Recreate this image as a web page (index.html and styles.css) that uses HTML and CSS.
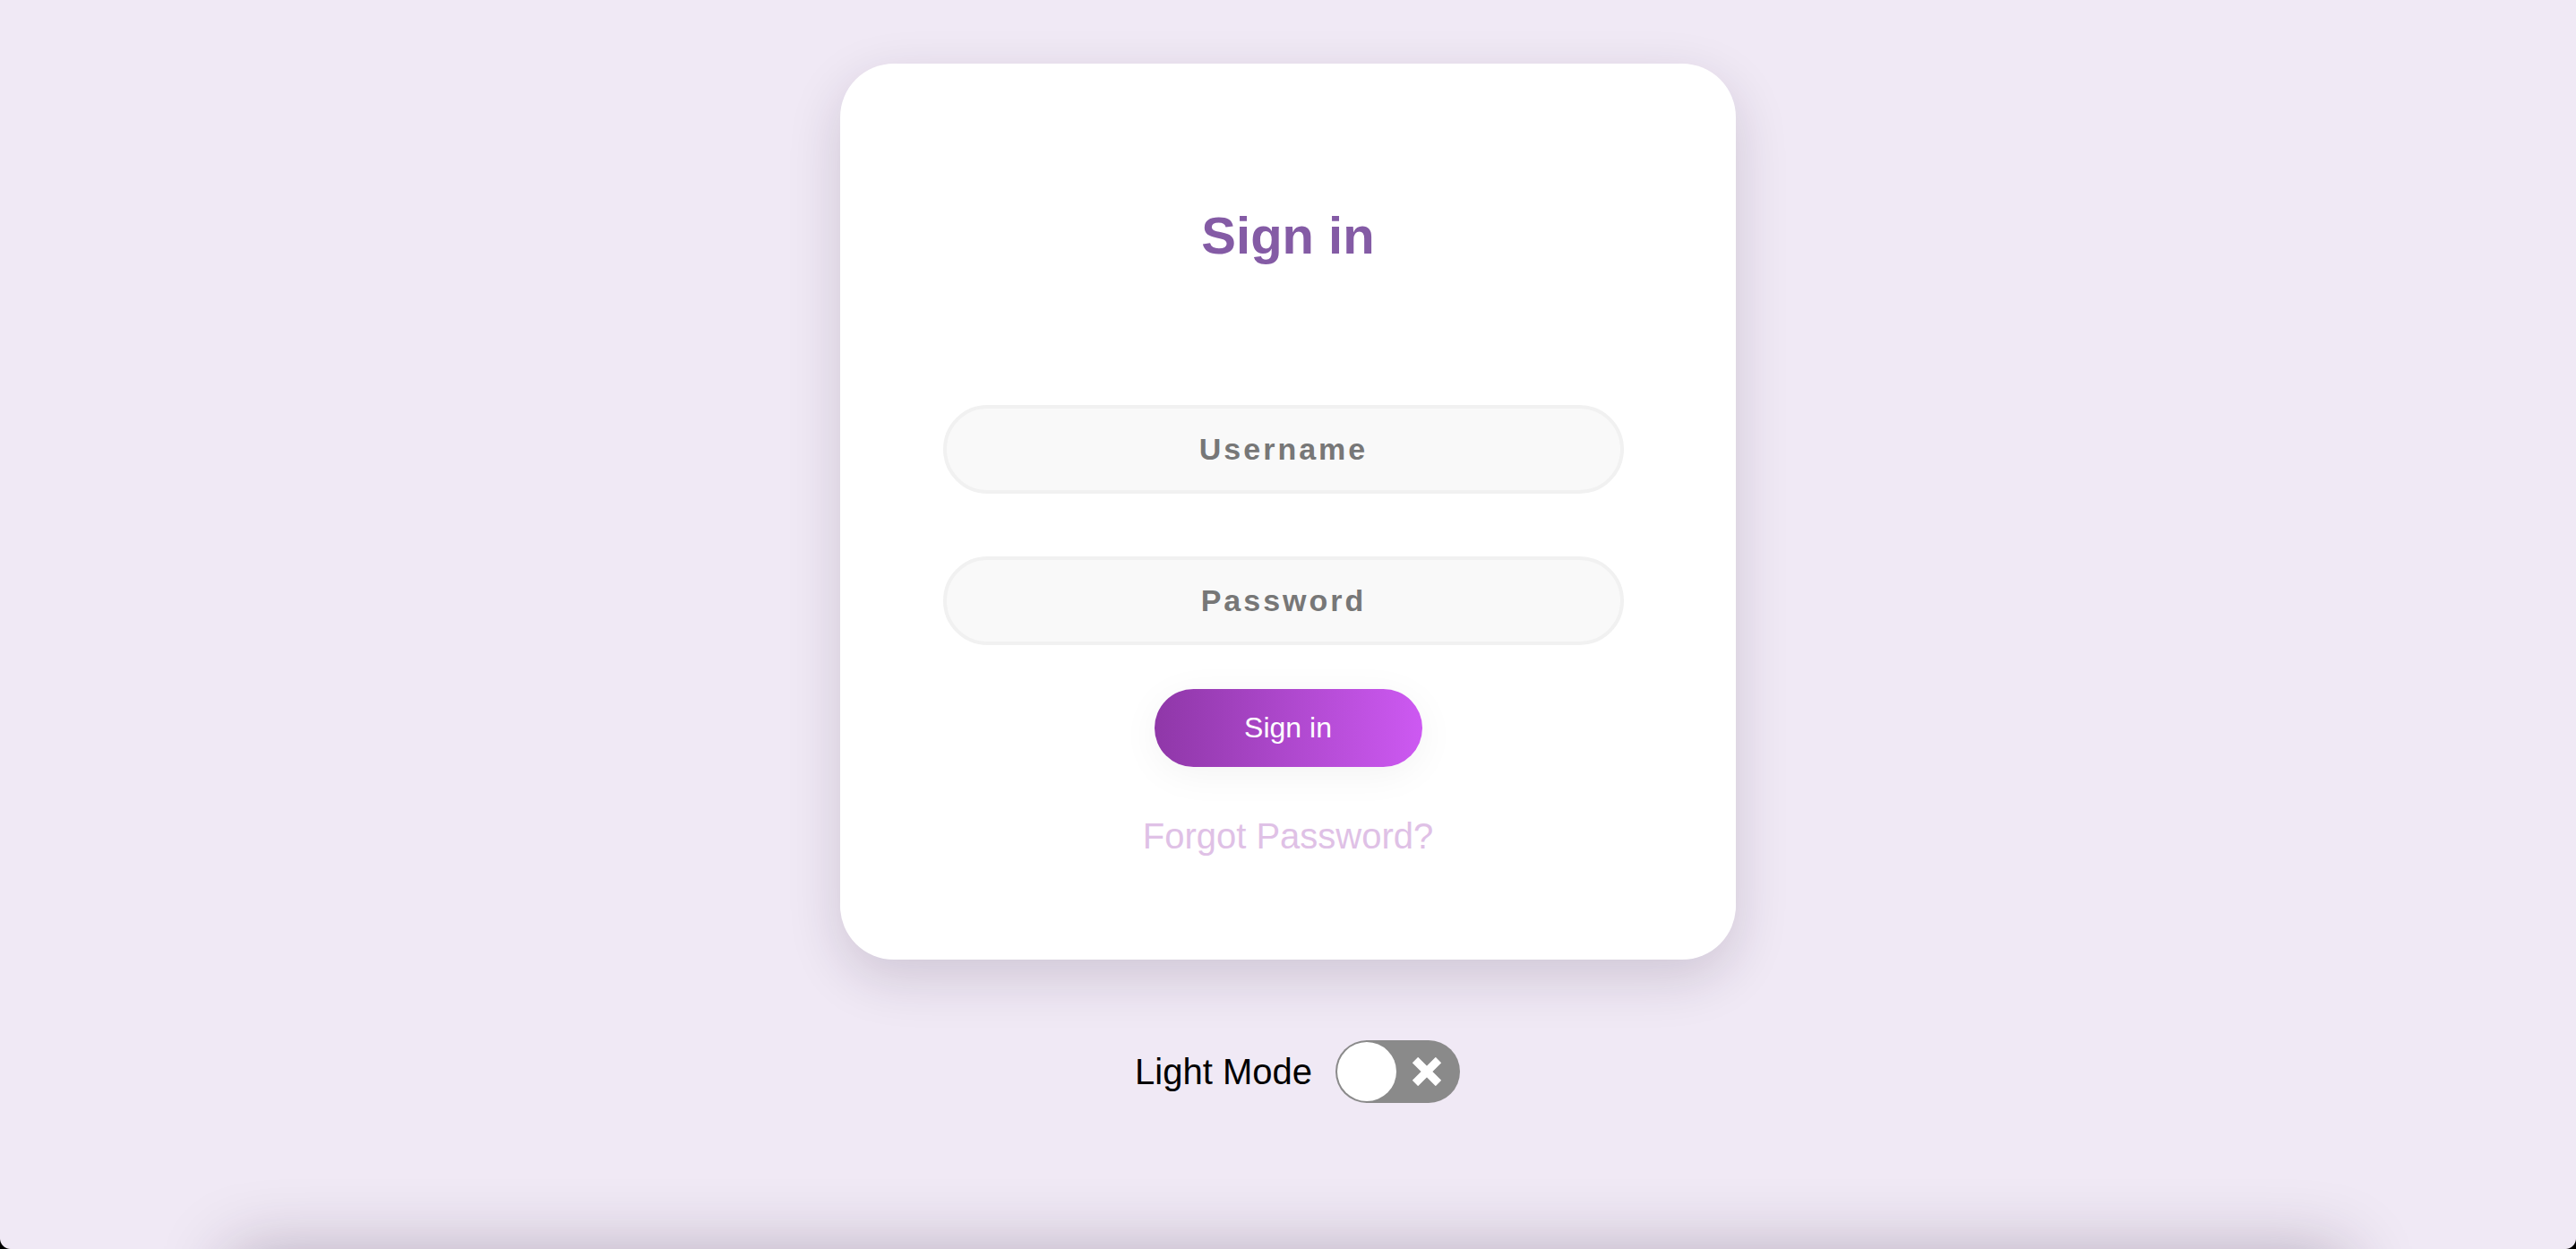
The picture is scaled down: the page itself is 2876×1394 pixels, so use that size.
FILE: index.html
```html
<!DOCTYPE html>
<html lang="en">
<head>
<meta charset="utf-8">
<title>Sign in</title>
<link rel="stylesheet" href="styles.css">
</head>
<body>
<div class="viewport">
  <main class="page">
    <section class="card">
      <h1 class="title">Sign in</h1>
      <form class="form">
        <input class="field" type="text" placeholder="Username">
        <input class="field field-password" type="password" placeholder="Password">
        <button class="btn" type="button">Sign in</button>
        <a class="forgot" href="#">Forgot Password?</a>
      </form>
    </section>
    <div class="mode-row">
      <span class="mode-label">Light Mode</span>
      <span class="toggle">
        <span class="knob"></span>
        <svg class="toggle-x" width="34" height="32" viewBox="0 0 34 32" aria-hidden="true">
          <path d="M4 3 L30 29 M30 3 L4 29" stroke="#fff" stroke-width="9" stroke-linecap="butt" fill="none"/>
        </svg>
      </span>
    </div>
    <div class="footer-panel"></div>
  </main>
  <span class="corner corner-left"></span>
  <span class="corner corner-right"></span>
</div>
</body>
</html>
```

FILE: styles.css
```css
html, body {
  margin: 0;
  padding: 0;
}

body {
  background: #f0e9f5;
  font-family: "Liberation Sans", Arial, Helvetica, sans-serif;
}

.viewport {
  height: 1394px;
  overflow: hidden;
  position: relative;
}

.page {
  display: flex;
  flex-direction: column;
  align-items: center;
}

.card {
  box-sizing: border-box;
  width: 1000px;
  height: 1000px;
  margin-top: 71px;
  background: #fff;
  border-radius: 60px;
  box-shadow: 0 20px 60px rgba(40, 20, 50, 0.16);
  padding-top: 163px;
  display: flex;
  flex-direction: column;
  align-items: center;
}

.title {
  margin: 0;
  font-size: 58px;
  line-height: 58px;
  font-weight: bold;
  color: #845ba5;
}

.form {
  margin-top: 160px;
  display: flex;
  flex-direction: column;
  align-items: center;
}

.field {
  box-sizing: border-box;
  width: 760px;
  height: 99px;
  margin-right: 10px;
  border: 4px solid #f1f1f1;
  border-radius: 50px;
  background: #f9f9f9;
  font-family: "Liberation Sans", Arial, Helvetica, sans-serif;
  font-size: 34px;
  font-weight: bold;
  letter-spacing: 3px;
  text-align: center;
  color: #777;
  outline: none;
  padding: 0;
}

.field::placeholder {
  color: #777;
  opacity: 1;
}

.field-password {
  margin-top: 70px;
}

.btn {
  margin-top: 49px;
  width: 299px;
  height: 87px;
  border: none;
  border-radius: 44px;
  background: linear-gradient(to right, #8f37a8, #cd59f2);
  color: #fff;
  font-family: "Liberation Sans", Arial, Helvetica, sans-serif;
  font-size: 32px;
  box-shadow: 0 8px 44px rgba(0, 0, 0, 0.05);
  padding: 0;
}

.forgot {
  margin-top: 57px;
  font-size: 40px;
  line-height: 40px;
  color: #dfc1e6;
  text-decoration: none;
}

.mode-row {
  margin-top: 90px;
  margin-left: 21px;
  display: flex;
  align-items: center;
  gap: 26px;
  height: 70px;
}

.mode-label {
  font-size: 40px;
  color: #000;
}

.toggle {
  position: relative;
  width: 139px;
  height: 70px;
  border-radius: 35px;
  background: #8a8a8a;
  display: block;
}

.knob {
  position: absolute;
  left: 2px;
  top: 2px;
  width: 66px;
  height: 66px;
  border-radius: 50%;
  background: #fff;
}

.toggle-x {
  position: absolute;
  left: 85px;
  top: 19px;
}

.footer-panel {
  width: 2360px;
  height: 200px;
  margin-top: 168px;
  background: #f0e9f5;
  box-shadow: 0 0 80px rgba(40, 20, 50, 0.3);
  flex-shrink: 0;
}

.corner {
  position: absolute;
  bottom: 0;
  width: 12px;
  height: 12px;
}

.corner-left {
  left: 0;
  background: radial-gradient(circle at 12px 0, transparent 11.5px, #000 12.5px);
}

.corner-right {
  right: 0;
  background: radial-gradient(circle at 0 0, transparent 11.5px, #000 12.5px);
}
```
